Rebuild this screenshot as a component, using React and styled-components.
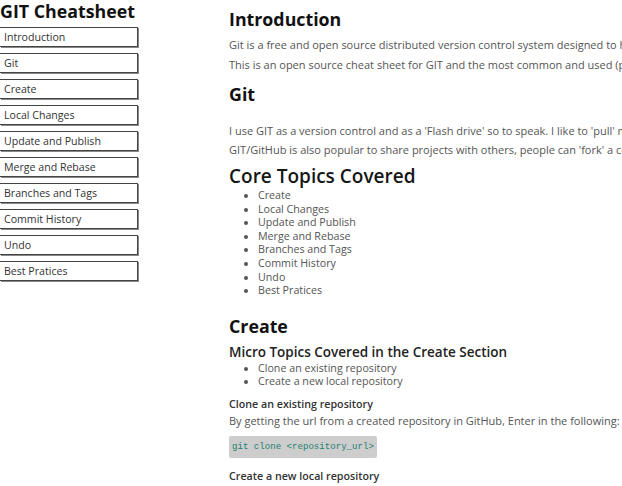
import styled, { createGlobalStyle } from 'styled-components'

const GlobalStyle = createGlobalStyle`
html, body {
margin: 0;
padding: 0;
background: #fff;
overflow: hidden;
}
body {
font-family: "Open Sans", "Noto Sans", sans-serif;
color: #333;
}
`

const Page = styled.div`
display: flex;
width: 622px;
height: 486px;
overflow: hidden;
`
const Sidebar = styled.nav`
width: 138px;
flex: none;
`
const SideTitle = styled.h1`
margin: 0 0 4px 0;
font-size: 17.8px;
line-height: 23px;
font-weight: 700;
color: #111;
white-space: nowrap;
`
const NavList = styled.div`
display: flex;
flex-direction: column;
gap: 6px;
`
const NavItem = styled.a`
display: block;
height: 20px;
box-sizing: border-box;
border: 1px solid #444;
border-left: none;
box-shadow: 1px 1px 0 #888;
padding-left: 4px;
font-size: 10.6px;
line-height: 18px;
color: #333;
text-decoration: none;
white-space: nowrap;
`
const Main = styled.main`
margin-left: 91px;
flex: none;
width: 900px;
`
const SectionTitle = styled.h2`
margin: ${props => props.top || '8px'} 0 0 0;
font-size: 17.8px;
line-height: 22px;
font-weight: 700;
color: #111;
`
const CoreTitle = styled.h2`
margin: 6px 0 0 0;
font-size: 19px;
line-height: 26px;
font-weight: 600;
color: #161616;
`
const Para = styled.p`
margin: ${props => props.top || '6px'} 0 0 0;
font-size: 11px;
line-height: 14px;
color: #555;
white-space: nowrap;
`
const Bullets = styled.ul`
margin: ${props => props.top || '0'} 0 0 0;
padding-left: 29px;
list-style: disc;
font-size: 10.7px;
line-height: 13.6px;
color: #555;
`
const SubTitle = styled.h3`
margin: 6px 0 0 0;
font-size: 13.5px;
line-height: 18px;
font-weight: 600;
color: #222;
`
const MiniTitle = styled.h4`
margin: ${props => props.top || '9px'} 0 0 0;
font-size: 10.7px;
line-height: 12px;
font-weight: 600;
color: #333;
`
const Code = styled.pre`
display: block;
width: fit-content;
margin: 8px 0 0 0;
padding: 0 3px;
height: 22px;
line-height: 22px;
background: #cdcdcd;
color: #1f7f6f;
font-family: "Liberation Mono", "DejaVu Sans Mono", monospace;
font-size: 9.1px;
border-radius: 2px;
`

const navItems = [
  'Introduction', 'Git', 'Create', 'Local Changes', 'Update and Publish',
  'Merge and Rebase', 'Branches and Tags', 'Commit History', 'Undo', 'Best Pratices',
]

const topics = navItems.slice(2)

export default function App() {
  return (
    <Page>
      <GlobalStyle />
      <Sidebar>
        <SideTitle>GIT Cheatsheet</SideTitle>
        <NavList>
          {navItems.map(item => (
            <NavItem key={item} href="#">{item}</NavItem>
          ))}
        </NavList>
      </Sidebar>

      <Main>
        <SectionTitle top="8px">Introduction</SectionTitle>
        <Para top="8px">Git is a free and open source distributed version control system designed to handle everything from small to very large projects with speed and efficiency.</Para>
        <Para>This is an open source cheat sheet for GIT and the most common and used (popular) commands.</Para>

        <SectionTitle top="11px">Git</SectionTitle>
        <Para top="19px">I use GIT as a version control and as a 'Flash drive' so to speak. I like to 'pull' my projects from anywhere.</Para>
        <Para top="5px">GIT/GitHub is also popular to share projects with others, people can 'fork' a copy of a repository.</Para>

        <CoreTitle>Core Topics Covered</CoreTitle>
        <Bullets>
          {topics.map(t => <li key={t}>{t}</li>)}
        </Bullets>

        <SectionTitle top="17px">Create</SectionTitle>
        <SubTitle>Micro Topics Covered in the Create Section</SubTitle>
        <Bullets top="1px">
          <li>Clone an existing repository</li>
          <li>Create a new local repository</li>
        </Bullets>
        <MiniTitle>Clone an existing repository</MiniTitle>
        <Para top="4px">By getting the url from a created repository in GitHub, Enter in the following:</Para>
        <Code>git clone &lt;repository_url&gt;</Code>
        <MiniTitle top="12px">Create a new local repository</MiniTitle>
      </Main>
    </Page>
  )
}
